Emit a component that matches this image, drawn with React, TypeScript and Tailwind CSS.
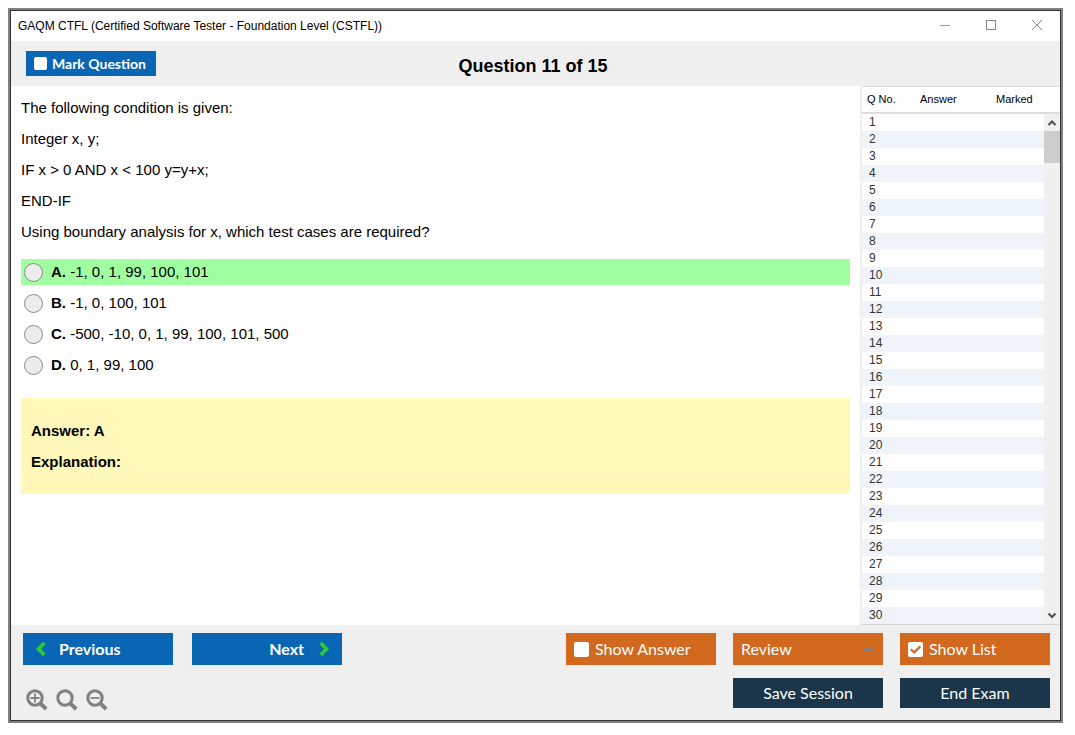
import { useState } from "react"
import type { ReactNode } from "react"

const conditions = [
  "The following condition is given:",
  "Integer x, y;",
  "IF x > 0 AND x < 100 y=y+x;",
  "END-IF",
  "Using boundary analysis for x, which test cases are required?",
]

const options = [
  { key: "A", text: "-1, 0, 1, 99, 100, 101" },
  { key: "B", text: "-1, 0, 100, 101" },
  { key: "C", text: "-500, -10, 0, 1, 99, 100, 101, 500" },
  { key: "D", text: "0, 1, 99, 100" },
]

const correct = "A"
const rows = Array.from({ length: 30 }, (_, i) => i + 1)

const CheckBox = ({ id, checked, onChange, className }: {
  id: string
  checked: boolean
  onChange: () => void
  className: string
}) => (
  <span className={`relative shrink-0 ${className}`}>
    <input
      id={id}
      type="checkbox"
      checked={checked}
      onChange={onChange}
      className="block h-full w-full appearance-none rounded-xs bg-white"
    />
    {checked && (
      <svg viewBox="0 0 15 15" className="pointer-events-none absolute inset-0 h-full w-full" fill="none">
        <path d="M2.8 7.2 6.2 10.4 12.4 4.4" stroke="#d2691e" strokeWidth="2.2" />
      </svg>
    )}
  </span>
)

const ZoomButton = ({ label, children }: { label: string; children?: ReactNode }) => (
  <button type="button" aria-label={label} className="h-[22px] w-[22px]">
    <svg viewBox="0 0 22 22" className="h-full w-full" fill="none" stroke="#808080">
      <circle cx="9" cy="9" r="7.2" strokeWidth="3" />
      <path d="M14 14 20.2 20.2" strokeWidth="4" />
      {children}
    </svg>
  </button>
)

const TitleBar = () => (
  <header className="flex h-[30px] items-center justify-between bg-white pl-[7px] pr-[17px]">
    <h1 className="text-[12px] leading-4">
      GAQM CTFL (Certified Software Tester - Foundation Level (CSTFL))
    </h1>
    <div className="flex items-center gap-[34px]">
      <button type="button" aria-label="Minimize" className="h-3 w-3">
        <svg viewBox="0 0 12 12" stroke="#999" fill="none"><path d="M1 5.5h10" /></svg>
      </button>
      <button type="button" aria-label="Maximize" className="h-3 w-3">
        <svg viewBox="0 0 12 12" stroke="#888" fill="none"><rect x="1.5" y="0.5" width="9" height="9" /></svg>
      </button>
      <button type="button" aria-label="Close" className="h-3 w-3">
        <svg viewBox="0 0 12 12" stroke="#888" fill="none"><path d="M1 0 11 10M11 0 1 10" /></svg>
      </button>
    </div>
  </header>
)

const QuestionList = () => (
  <aside className="flex w-[200px] shrink-0 flex-col border-b border-l-2 border-b-[#d5d5d5] border-l-[#efefef] bg-white text-[#333]">
    <table className="w-full table-fixed border-collapse text-left leading-[17px]">
      <colgroup>
        <col className="w-[46px]" />
        <col />
        <col className="w-[76px]" />
        <col className="w-[16px]" />
      </colgroup>
      <thead className="text-[11px]">
        <tr className="h-[26px] border-b-2 border-t border-[#dcdcdc] text-black">
          <th className="py-0 pl-[5px] font-normal">Q No.</th>
          <th className="py-0 pl-3 font-normal">Answer</th>
          <th className="py-0 pl-7 font-normal" colSpan={2}>Marked</th>
        </tr>
      </thead>
      <tbody className="text-[12px]">
        {rows.map((n) => (
          <tr key={n} className="h-[17px] odd:bg-white even:bg-[#eef4f9]">
            <td className="py-0 pl-[7px]">{n}</td>
            <td />
            <td />
            {n === 1 && (
              <td rowSpan={rows.length} className="h-px bg-[#f0f0f0] p-0 align-top">
                <div className="flex h-full flex-col items-center justify-between">
                  <div className="w-full">
                    <svg viewBox="0 0 16 17" className="block h-[17px] w-full" fill="none" stroke="#505050" strokeWidth="2">
                      <path d="M4.5 11 8 7.5 11.5 11" />
                    </svg>
                    <div className="h-8 bg-[#cdcdcd]" />
                  </div>
                  <svg viewBox="0 0 16 17" className="block h-[17px] w-full" fill="none" stroke="#505050" strokeWidth="2">
                    <path d="M4.5 6.5 8 10 11.5 6.5" />
                  </svg>
                </div>
              </td>
            )}
          </tr>
        ))}
      </tbody>
    </table>
  </aside>
)

const App = () => {
  const [marked, setMarked] = useState(false)
  const [showAnswer, setShowAnswer] = useState(false)
  const [showList, setShowList] = useState(true)
  const [picked, setPicked] = useState("")

  return (
    <div className="flex min-h-screen bg-white pb-3 pl-2 pr-3 pt-2 font-['Liberation_Sans',Arial,sans-serif] text-black">
      <div className="flex flex-1 border-2 border-[#808080]">
        <div className="flex min-w-0 flex-1 flex-col border border-[#333] bg-[#efefef]">
          <TitleBar />

          <div className="grid h-[45px] grid-cols-[1fr_auto_1fr] items-end pb-2.5 pl-[15px] pr-5">
            <label
              htmlFor="mark"
              className="flex h-[25px] w-[130px] items-center gap-[5px] bg-[#0866b4] pl-2 font-['Lato',sans-serif] text-[14px] font-bold text-white"
            >
              <CheckBox id="mark" checked={marked} onChange={() => setMarked(!marked)} className="h-[13px] w-[13px]" />
              Mark Question
            </label>
            <h2 className="text-[18px] font-bold leading-5">Question 11 of 15</h2>
          </div>

          <div className="flex flex-1">
            <main className="min-w-0 flex-1 bg-white px-2.5 pt-1.5 text-[15px]">
              {conditions.map((line) => (
                <p key={line} className="leading-[31px]">{line}</p>
              ))}

              <fieldset className="mt-3 flex flex-col gap-[5px]">
                {options.map(({ key, text }) => (
                  <label
                    key={key}
                    htmlFor={`option-${key}`}
                    className={`flex h-[26px] items-center gap-2 pl-[3px] ${key === correct ? "bg-[#a0ffa0]" : ""}`}
                  >
                    <input
                      id={`option-${key}`}
                      type="radio"
                      name="answer"
                      checked={picked === key}
                      onChange={() => setPicked(key)}
                      className="h-[19px] w-[19px] shrink-0 appearance-none rounded-full border border-[#8a8a8a] bg-[#ececec] checked:bg-[#555]"
                    />
                    <span><b>{key}.</b> {text}</span>
                  </label>
                ))}
              </fieldset>

              <section className="mt-5 h-24 bg-[#fff8b8] px-2.5 pt-[17px] font-bold leading-[31px]">
                <p>Answer: {correct}</p>
                <p>Explanation:</p>
              </section>
            </main>
            {showList && <QuestionList />}
          </div>

          <footer className="flex justify-between px-2.5 pb-[9px] pt-2 font-['Lato',sans-serif]">
            <div className="flex flex-col gap-6 pl-0.5">
              <div className="flex gap-[19px] text-[16px] font-bold text-white">
                <button type="button" className="flex h-8 w-[150px] items-center gap-3 bg-[#0866b4] pl-3">
                  <svg viewBox="0 0 12 16" className="h-4 w-3" fill="none" stroke="#2ecc2e" strokeWidth="3.6">
                    <path d="M9.3 2 3.5 8 9.3 14" />
                  </svg>
                  Previous
                </button>
                <button type="button" className="flex h-8 w-[150px] items-center justify-end gap-3.5 bg-[#0866b4] pr-3">
                  Next
                  <svg viewBox="0 0 12 16" className="h-4 w-3" fill="none" stroke="#2ecc2e" strokeWidth="3.6">
                    <path d="M2.7 2 8.5 8 2.7 14" />
                  </svg>
                </button>
              </div>
              <div className="flex gap-2 pl-[3px]">
                <ZoomButton label="Zoom in"><path d="M4.5 9h9M9 4.5v9" strokeWidth="1.8" /></ZoomButton>
                <ZoomButton label="Reset zoom" />
                <ZoomButton label="Zoom out"><path d="M4.5 9h9" strokeWidth="1.8" /></ZoomButton>
              </div>
            </div>

            <div className="grid grid-cols-[repeat(3,150px)] content-start gap-x-[17px] gap-y-[13px] text-[16px] text-white">
              <label htmlFor="show-answer" className="flex h-8 items-center gap-1.5 bg-[#d2691e] pl-2">
                <CheckBox id="show-answer" checked={showAnswer} onChange={() => setShowAnswer(!showAnswer)} className="h-[15px] w-[15px]" />
                Show Answer
              </label>
              <button type="button" className="flex h-8 items-center justify-between bg-[#d2691e] pl-2 pr-[9px]">
                Review
                <svg viewBox="0 0 12 6" className="h-1.5 w-3" fill="#808080"><path d="M6 0 12 6H0Z" /></svg>
              </button>
              <label htmlFor="show-list" className="flex h-8 items-center gap-1.5 bg-[#d2691e] pl-2">
                <CheckBox id="show-list" checked={showList} onChange={() => setShowList(!showList)} className="h-[15px] w-[15px]" />
                Show List
              </label>
              <button type="button" className="col-start-2 h-[30px] bg-[#1b354a]">Save Session</button>
              <button type="button" className="h-[30px] bg-[#1b354a]">End Exam</button>
            </div>
          </footer>
        </div>
      </div>
    </div>
  )
}

export default App
